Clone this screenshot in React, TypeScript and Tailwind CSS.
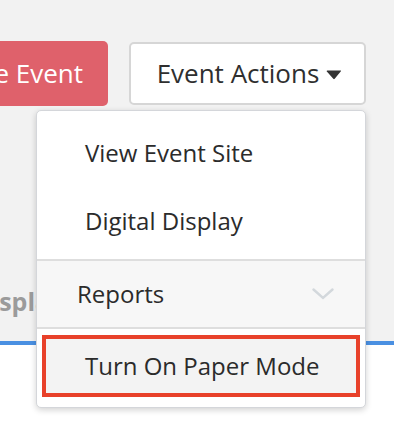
import React from "react";

const font = { fontFamily: '"Open Sans", "Noto Sans", sans-serif' };

function Caret() {
  return (
    <svg width="16" height="10" viewBox="0 0 16 10" className="ml-[7px] mt-[3px]">
      <path d="M0.6 1.3 Q0.6 0.5 1.4 0.5 H14.6 Q15.4 0.5 14.9 1.3 L8.7 8.8 Q8 9.6 7.3 8.8 Z" fill="#333" />
    </svg>
  );
}

function Chevron() {
  return (
    <svg width="22" height="12" viewBox="0 0 22 12">
      <path d="M1.5 1.5 L11 10 L20.5 1.5" fill="none" stroke="#d3d8dc" strokeWidth="2.4" strokeLinecap="round" />
    </svg>
  );
}

export default function App() {
  return (
    <div className="relative h-[430px] w-[394px] overflow-hidden bg-white" style={font}>
      <div className="h-[341px] bg-[#f2f2f2] pt-[41px]">
        <div className="flex w-[366px] justify-end gap-[21px]">
          <button className="flex h-[65px] shrink-0 items-center rounded-[5px] bg-[#df616b] pl-[40px] pr-[25px] text-[26px] text-white">
            Delete Event
          </button>
          <button className="mt-[1px] flex h-[63px] w-[237px] shrink-0 items-center justify-center rounded-[5px] border-2 border-[#d6d6d6] bg-white pl-[4px] text-[26px] text-[#2f2f2f]">
            Event Actions
            <Caret />
          </button>
        </div>
        <div className="ml-[-27px] mt-[177px] text-[25px] font-bold text-[#9b9b9b]">Display</div>
      </div>
      <div className="h-[4px] bg-[#4a90e2]" />

      <div className="absolute left-[36px] top-[110px] w-[330px] rounded-[5px] border border-[#d4d6da] bg-white pb-[10px] shadow-[0_2px_6px_rgba(0,0,0,0.18)]">
        <div className="pt-[8px]">
          <div className="flex h-[68px] items-center pl-[48px] text-[24px] text-[#2b2b2b]">View Event Site</div>
          <div className="flex h-[68px] items-center pl-[48px] text-[24px] text-[#2b2b2b]">Digital Display</div>
        </div>
        <div className="mt-[4px] flex h-[70px] items-center justify-between border-y-2 border-[#dedede] bg-[#f7f7f7] pl-[40px] pr-[31px] text-[24px] text-[#2b2b2b]">
          <span>Reports</span>
          <Chevron />
        </div>
        <div className="mx-[5px] mt-[6px] flex h-[62px] items-center border-4 border-[#e8412a] bg-[#f3f3f3] pl-[39px] text-[24px] text-[#2b2b2b]">
          Turn On Paper Mode
        </div>
      </div>
    </div>
  );
}
